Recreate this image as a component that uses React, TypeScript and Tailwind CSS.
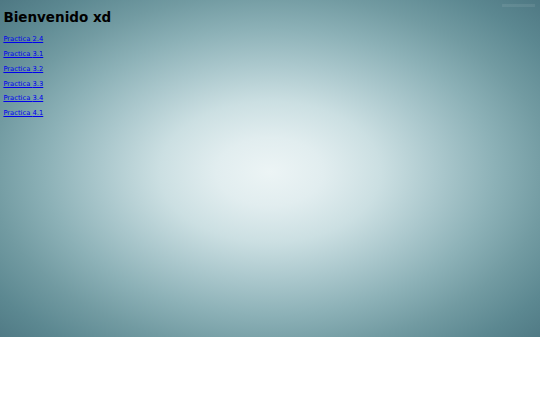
export default function App() {
  const links = ["2.4", "3.1", "3.2", "3.3", "3.4", "4.1"];

  return (
    <div className="min-h-screen bg-white bg-[linear-gradient(rgba(255,255,255,0.08),rgba(255,255,255,0.08)),radial-gradient(ellipse_at_50%_51%,#ecf4f5_0%,#e1edef_14%,#cbdfe2_29%,#abc8cd_44%,#8cb1b7_59%,#729ba2_73%,#5c8891_87%,#4e7883_100%)] bg-no-repeat bg-[length:33px_3px,100%_337px] bg-[position:502px_4px,0_0] px-[3.4px] pt-[2px] font-['DejaVu_Sans',Verdana,sans-serif] text-black">
      {/* Title */}
      <h1 className="mt-[8px] mb-[9.5px] text-[13.5px] leading-[1.164] font-bold">
        Bienvenido xd
      </h1>

      {/* Practice links */}
      {links.map((n) => (
        <p key={n} className="my-[6.8px] text-[6.75px] leading-[8px]">
          <a href="#" className="text-[#0000ee] underline">
            Practica {n}
          </a>
        </p>
      ))}
    </div>
  );
}
